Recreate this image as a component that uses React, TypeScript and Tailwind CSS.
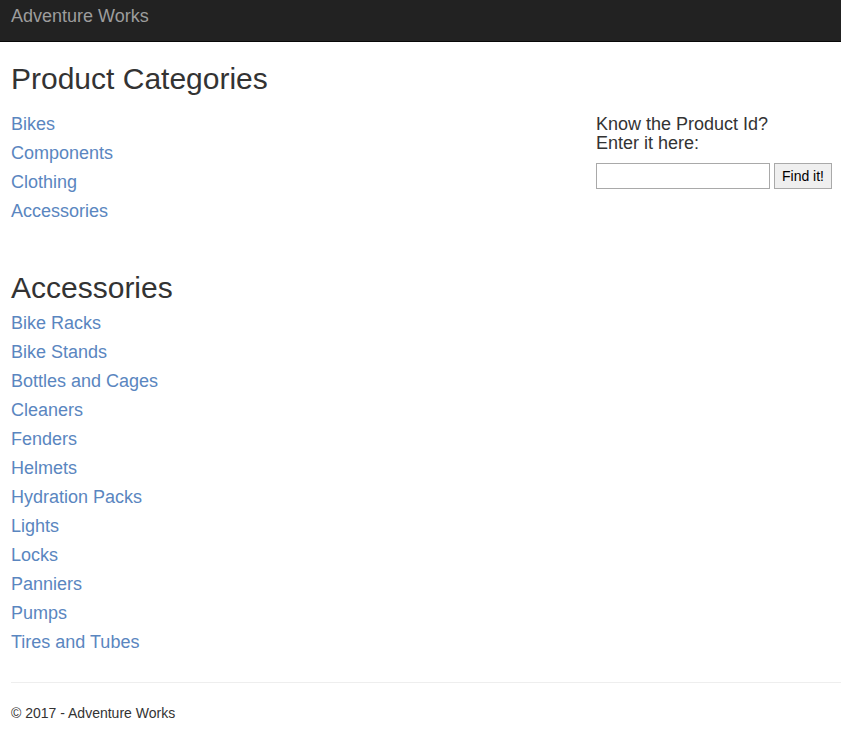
import React from "react";

const categories = ["Bikes", "Components", "Clothing", "Accessories"];
const accessories = [
  "Bike Racks",
  "Bike Stands",
  "Bottles and Cages",
  "Cleaners",
  "Fenders",
  "Helmets",
  "Hydration Packs",
  "Lights",
  "Locks",
  "Panniers",
  "Pumps",
  "Tires and Tubes",
];

export default function App() {
  return (
    <div className="min-h-[737px] bg-white text-[#333333]" style={{ fontFamily: '"Liberation Sans", Arial, sans-serif' }}>
      <div className="h-[42px] bg-[#222222] border-b border-[#080808] flex items-center pl-[11px]">
        <span className="text-[18px] leading-[20px] text-[#9d9d9d] -mt-[10px]">Adventure Works</span>
      </div>
      <div className="pl-[11px]">
        <div className="flex">
          <div className="w-[585px]">
            <h2 className="text-[30px] leading-[33px] mt-[20px]">Product Categories</h2>
            <ul className="mt-[15px]">
              {categories.map((c) => (
                <li key={c} className="h-[29px] flex items-center text-[18px] text-[#5a86c0]">
                  <a href="#">{c}</a>
                </li>
              ))}
            </ul>
          </div>
          <div className="pt-[73px]">
            <div className="text-[18px] leading-[19px]">
              Know the Product Id?
              <br />
              Enter it here:
            </div>
            <div className="flex mt-[10px] gap-[4px]">
              <input className="w-[174px] h-[26px] border border-[#a9a9a9] px-1 text-[14px]" type="text" />
              <button className="w-[58px] h-[26px] border border-[#a9a9a9] bg-[#efefef] text-[14px] text-black">
                Find it!
              </button>
            </div>
          </div>
        </div>
        <h2 className="text-[30px] leading-[33px] mt-[45px]">Accessories</h2>
        <ul className="mt-[5px]">
          {accessories.map((c) => (
            <li key={c} className="h-[29px] flex items-center text-[18px] text-[#5a86c0]">
              <a href="#">{c}</a>
            </li>
          ))}
        </ul>
        <hr className="mt-[25px] border-t border-[#eeeeee]" />
        <footer className="mt-[20px] text-[14px] leading-[20px]">© 2017 - Adventure Works</footer>
      </div>
    </div>
  );
}
